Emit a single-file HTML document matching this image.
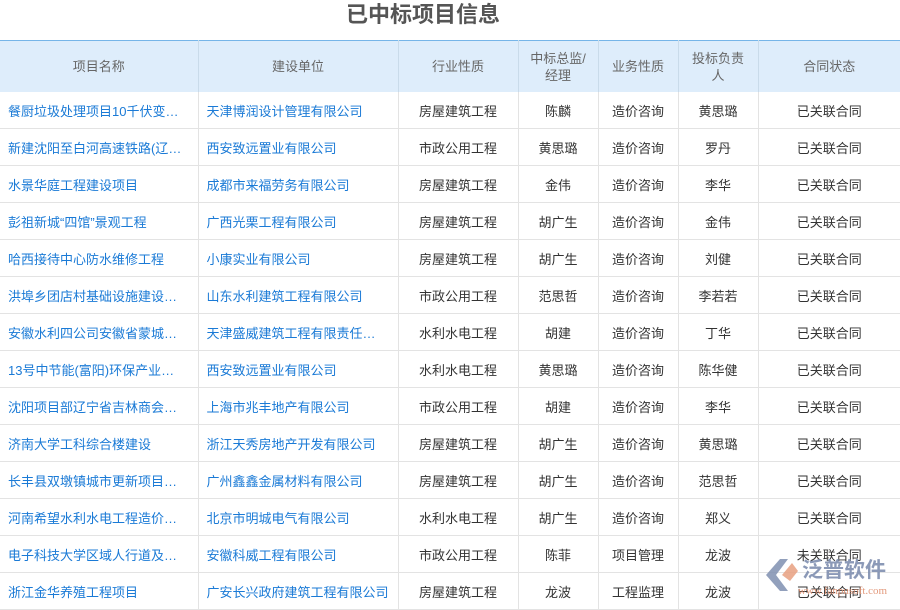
<!DOCTYPE html>
<html><head><meta charset="utf-8"><style>
body{margin:0;width:900px;height:600px;overflow:hidden;background:#fff;font-family:"Liberation Sans","Noto Sans CJK SC",sans-serif;position:relative}
h1{margin:0;position:absolute;top:1px;left:0;width:846px;text-align:center;font-size:22px;color:#555;font-weight:bold;line-height:28px}
table{position:absolute;top:40px;left:0;border-collapse:collapse;table-layout:fixed;width:900px;font-size:13px}
th{background:#deedfb;color:#666;font-weight:normal;height:51px;border-top:1px solid #76b5e8;border-right:1px solid #c9dbea;line-height:17px;padding:0 10px}
td{height:36px;border-bottom:1px solid #e3e3e3;border-right:1px solid #e3e3e3;text-align:center;color:#333;padding:0 8px;white-space:nowrap;overflow:hidden}
td.l{text-align:left;color:#1a7ad6;padding-left:8px}
tr>*:last-child{border-right:none}
.wm{position:absolute;left:762px;top:553px;width:135px;height:45px}
</style></head><body>
<h1>已中标项目信息</h1>
<table>
<colgroup><col style="width:198px"><col style="width:200px"><col style="width:120px"><col style="width:80px"><col style="width:80px"><col style="width:80px"><col style="width:142px"></colgroup>
<tr><th>项目名称</th><th>建设单位</th><th>行业性质</th><th>中标总监/经理</th><th>业务性质</th><th>投标负责人</th><th>合同状态</th></tr>
<tr><td class="l">餐厨垃圾处理项目10千伏变…</td><td class="l">天津博润设计管理有限公司</td><td>房屋建筑工程</td><td>陈麟</td><td>造价咨询</td><td>黄思璐</td><td>已关联合同</td></tr>
<tr><td class="l">新建沈阳至白河高速铁路(辽…</td><td class="l">西安致远置业有限公司</td><td>市政公用工程</td><td>黄思璐</td><td>造价咨询</td><td>罗丹</td><td>已关联合同</td></tr>
<tr><td class="l">水景华庭工程建设项目</td><td class="l">成都市来福劳务有限公司</td><td>房屋建筑工程</td><td>金伟</td><td>造价咨询</td><td>李华</td><td>已关联合同</td></tr>
<tr><td class="l">彭祖新城“四馆”景观工程</td><td class="l">广西光栗工程有限公司</td><td>房屋建筑工程</td><td>胡广生</td><td>造价咨询</td><td>金伟</td><td>已关联合同</td></tr>
<tr><td class="l">哈西接待中心防水维修工程</td><td class="l">小康实业有限公司</td><td>房屋建筑工程</td><td>胡广生</td><td>造价咨询</td><td>刘健</td><td>已关联合同</td></tr>
<tr><td class="l">洪埠乡团店村基础设施建设…</td><td class="l">山东水利建筑工程有限公司</td><td>市政公用工程</td><td>范思哲</td><td>造价咨询</td><td>李若若</td><td>已关联合同</td></tr>
<tr><td class="l">安徽水利四公司安徽省蒙城…</td><td class="l">天津盛威建筑工程有限责任…</td><td>水利水电工程</td><td>胡建</td><td>造价咨询</td><td>丁华</td><td>已关联合同</td></tr>
<tr><td class="l">13号中节能(富阳)环保产业…</td><td class="l">西安致远置业有限公司</td><td>水利水电工程</td><td>黄思璐</td><td>造价咨询</td><td>陈华健</td><td>已关联合同</td></tr>
<tr><td class="l">沈阳项目部辽宁省吉林商会…</td><td class="l">上海市兆丰地产有限公司</td><td>市政公用工程</td><td>胡建</td><td>造价咨询</td><td>李华</td><td>已关联合同</td></tr>
<tr><td class="l">济南大学工科综合楼建设</td><td class="l">浙江天秀房地产开发有限公司</td><td>房屋建筑工程</td><td>胡广生</td><td>造价咨询</td><td>黄思璐</td><td>已关联合同</td></tr>
<tr><td class="l">长丰县双墩镇城市更新项目…</td><td class="l">广州鑫鑫金属材料有限公司</td><td>房屋建筑工程</td><td>胡广生</td><td>造价咨询</td><td>范思哲</td><td>已关联合同</td></tr>
<tr><td class="l">河南希望水利水电工程造价…</td><td class="l">北京市明城电气有限公司</td><td>水利水电工程</td><td>胡广生</td><td>造价咨询</td><td>郑义</td><td>已关联合同</td></tr>
<tr><td class="l">电子科技大学区域人行道及…</td><td class="l">安徽科威工程有限公司</td><td>市政公用工程</td><td>陈菲</td><td>项目管理</td><td>龙波</td><td>未关联合同</td></tr>
<tr><td class="l">浙江金华养殖工程项目</td><td class="l">广安长兴政府建筑工程有限公司</td><td>房屋建筑工程</td><td>龙波</td><td>工程监理</td><td>龙波</td><td>已关联合同</td></tr>
</table>
<svg class="wm" viewBox="0 0 135 45">
<path d="M4 22 L18 6 L26 6 L14 22 L26 38 L18 38 Z" fill="#7f8fb0" opacity="0.85"/>
<path d="M20 22 L30 10 L36 18 L28 28 Z" fill="#e8a080" opacity="0.85"/>
<text x="40" y="24" font-size="21" fill="#7f8fb0" font-family="Noto Sans CJK SC,sans-serif" font-weight="bold" opacity="0.9">泛普软件</text>
<text x="36" y="41" font-size="11" fill="#e09070" font-family="Liberation Serif,serif" opacity="0.9">www.fanpusoft.com</text>
</svg>
</body></html>
